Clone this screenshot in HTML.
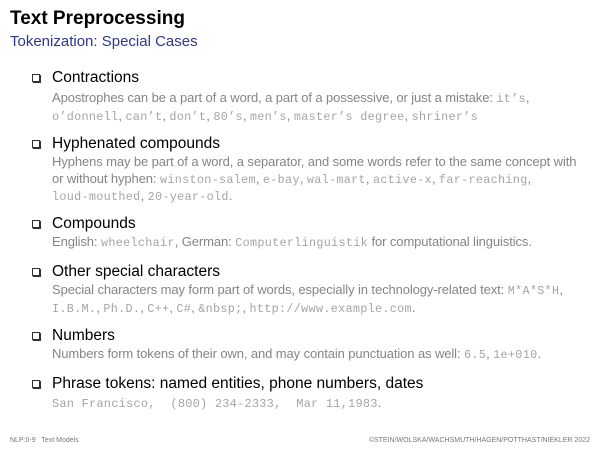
<!DOCTYPE html>
<html><head><meta charset="utf-8"><style>
body{margin:0;width:600px;height:450px;background:#fff;position:relative;overflow:hidden;font-family:"Liberation Sans",sans-serif}
.a{position:absolute;white-space:nowrap;line-height:1}
.t{left:10px;top:9px;font-size:19px;font-weight:bold;color:#000}
.s{left:10px;top:34px;font-size:15px;color:#2b3990}
.h{left:52px;font-size:15.5px;color:#000}
.b{left:52px;font-size:13px;color:#858585;letter-spacing:-0.1px}
.m{font-family:"Liberation Mono",monospace;font-size:11.8px;color:#a5a5a5;letter-spacing:0.3px}
.q{position:absolute;left:32px;width:6px;height:6px;border:1px solid #333;box-shadow:1px 1px 0 #333}
.f{top:437px;font-size:7px;color:#777}
</style></head><body>
<div class="a t">Text Preprocessing</div>
<div class="a s">Tokenization: Special Cases</div>

<div class="q" style="top:74px"></div>
<div class="a h" style="top:70px">Contractions</div>
<div class="a b" style="top:91px">Apostrophes can be a part of a word, a part of a possessive, or just a mistake: <span class="m">it’s</span>,</div>
<div class="a b" style="top:109px"><span class="m">o’donnell</span>, <span class="m">can’t</span>, <span class="m">don’t</span>, <span class="m">80’s</span>, <span class="m">men’s</span>, <span class="m">master’s degree</span>, <span class="m">shriner’s</span></div>

<div class="q" style="top:140px"></div>
<div class="a h" style="top:136px">Hyphenated compounds</div>
<div class="a b" style="top:155px">Hyphens may be part of a word, a separator, and some words refer to the same concept with</div>
<div class="a b" style="top:172px">or without hyphen: <span class="m">winston-salem</span>, <span class="m">e-bay</span>, <span class="m">wal-mart</span>, <span class="m">active-x</span>, <span class="m">far-reaching</span>,</div>
<div class="a b" style="top:189px"><span class="m">loud-mouthed</span>, <span class="m">20-year-old</span>.</div>

<div class="q" style="top:220px"></div>
<div class="a h" style="top:216px">Compounds</div>
<div class="a b" style="top:235px">English: <span class="m">wheelchair</span>, German: <span class="m">Computerlinguistik</span> for computational linguistics.</div>

<div class="q" style="top:268px"></div>
<div class="a h" style="top:264px">Other special characters</div>
<div class="a b" style="top:283px">Special characters may form part of words, especially in technology-related text: <span class="m">M*A*S*H</span>,</div>
<div class="a b" style="top:301px"><span class="m">I.B.M.</span>, <span class="m">Ph.D.</span>, <span class="m">C++</span>, <span class="m">C#</span>, <span class="m">&amp;nbsp;</span>, <span class="m">http://www.example.com</span>.</div>

<div class="q" style="top:332px"></div>
<div class="a h" style="top:328px">Numbers</div>
<div class="a b" style="top:347px">Numbers form tokens of their own, and may contain punctuation as well: <span class="m">6.5</span>, <span class="m">1e+010</span>.</div>

<div class="q" style="top:380px"></div>
<div class="a h" style="top:376px">Phrase tokens: named entities, phone numbers, dates</div>
<div class="a b" style="top:396px"><span class="m" style="font-size:12px;letter-spacing:0.2px">San Francisco,&nbsp; (800) 234-2333,&nbsp; Mar 11,1983</span>.</div>

<div class="a f" style="left:10px">NLP:II-9 &nbsp; Text Models</div>
<div class="a f" style="right:10px">©STEIN/WOLSKA/WACHSMUTH/HAGEN/POTTHAST/NIEKLER 2022</div>
</body></html>
